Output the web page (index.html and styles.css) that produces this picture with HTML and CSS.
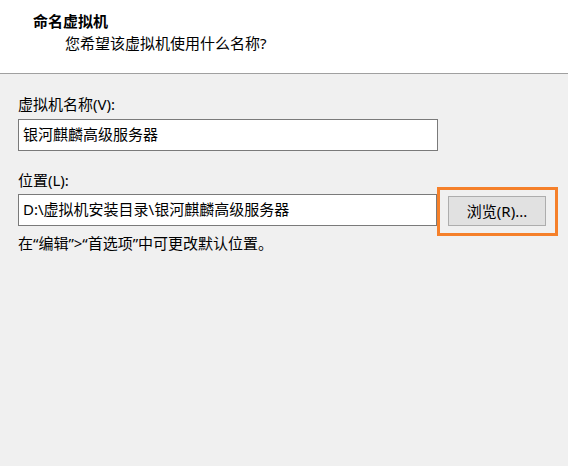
FILE: index.html
```html
<!DOCTYPE html>
<html lang="zh-CN">
<head>
<meta charset="utf-8">
<title>命名虚拟机</title>
<link rel="stylesheet" href="styles.css">
</head>
<body>
<div class="wizard">
  <header class="head">
    <div class="title">命名虚拟机</div>
    <div class="subtitle">您希望该虚拟机使用什么名称?</div>
  </header>
  <main class="body">
    <label class="label lbl-name">虚拟机名称(V):</label>
    <div class="field">银河麒麟高级服务器</div>
    <label class="label lbl-loc">位置(L):</label>
    <div class="row">
      <div class="field field-loc">D:\虚拟机安装目录\银河麒麟高级服务器</div>
      <div class="highlight">
        <button class="btn">浏览(R)...</button>
      </div>
    </div>
    <div class="hint">在“编辑”&gt;“首选项”中可更改默认位置。</div>
  </main>
</div>
</body>
</html>
```
FILE: styles.css
```css
html, body {
  margin: 0;
  padding: 0;
}
body {
  width: 568px;
  height: 466px;
  background: #f0f0f0;
  font-family: "Noto Sans", "Noto Sans CJK SC", sans-serif;
  font-size: 15px;
  color: #000;
  overflow: hidden;
}
.head {
  height: 74px;
  background: #fff;
  border-bottom: 1px solid #a0a0a0;
  box-sizing: border-box;
  padding: 10px 0 0 33px;
}
.title {
  font-weight: bold;
  line-height: 22px;
}
.subtitle {
  padding-left: 32px;
  line-height: 22px;
}
.body {
  padding: 0 18px;
  display: flex;
  flex-direction: column;
}
.label {
  display: block;
  line-height: 20px;
}
.lbl-name {
  margin-top: 20px;
}
.field {
  box-sizing: border-box;
  flex-shrink: 0;
  width: 420px;
  height: 32px;
  margin-top: 5px;
  background: #fff;
  border: 1px solid #7a7a7a;
  padding: 0 4px;
  line-height: 28px;
  white-space: nowrap;
}
.lbl-loc {
  margin-top: 19px;
}
.row {
  display: flex;
  align-items: center;
  margin-top: 4px;
}
.field-loc {
  width: 419px;
  height: 32px;
  margin-top: 0;
}
.highlight {
  box-sizing: border-box;
  flex-shrink: 0;
  width: 121px;
  height: 49px;
  margin: -7px 0 -10px 0;
  border: 3px solid #f5802a;
  display: flex;
  align-items: center;
  justify-content: center;
  padding-right: 1px;
}
.btn {
  box-sizing: border-box;
  width: 98px;
  height: 30px;
  margin-top: -2px;
  background: #e1e1e1;
  border: 1px solid #adadad;
  font: inherit;
  color: #000;
  padding: 0;
}
.hint {
  margin-top: 7px;
  line-height: 20px;
}
```
